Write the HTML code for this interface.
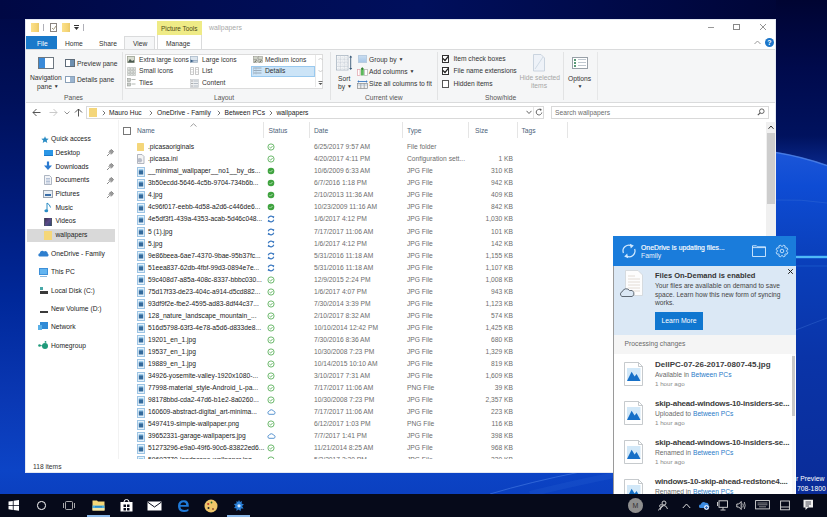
<!DOCTYPE html>
<html><head><meta charset="utf-8">
<style>
*{box-sizing:border-box;margin:0;padding:0}
html,body{width:827px;height:517px;overflow:hidden}
body{position:relative;font-family:"Liberation Sans",sans-serif;font-size:6.7px;color:#1e1e1e;background:#020a3a}
.a{position:absolute;white-space:nowrap}
.t{position:absolute;white-space:nowrap;line-height:10px;height:10px}
.ic{position:absolute}
</style></head><body>
<!-- desktop background -->
<div class="a" style="left:0;top:0;width:827px;height:517px;background:linear-gradient(180deg,#000844 0px,#00105a 100px,#001b7a 200px,#00289a 300px,#0a38b4 400px,#0c44c6 470px,#0b40c0 494px)"></div>
<div class="a" style="left:0;top:0;width:827px;height:19px;background:linear-gradient(90deg,#000844 0,#000c52 200px,#000f5c 420px,#000a4a 600px,#000432 827px)"></div>
<svg class="ic" style="left:776px;top:0" width="51" height="494">
<defs>
<linearGradient id="dk" x1="0" y1="0" x2="0" y2="1"><stop offset="0" stop-color="#000432"/><stop offset="0.4" stop-color="#000a4c"/><stop offset="0.8" stop-color="#00125e"/><stop offset="1" stop-color="#0a2a90"/></linearGradient>
<linearGradient id="bl" x1="0" y1="0" x2="0" y2="1"><stop offset="0" stop-color="#1c56d8"/><stop offset="0.1" stop-color="#0e4cd4"/><stop offset="0.3" stop-color="#0a40bc"/><stop offset="0.6" stop-color="#0a34a8"/><stop offset="1" stop-color="#0a2c98"/></linearGradient>
</defs>
<rect x="0" y="0" width="51" height="170" fill="url(#dk)"/>
<path d="M0 152 Q25 156 51 165 L51 494 L0 494 Z" fill="url(#bl)"/>
<path d="M0 152.5 Q25 156.5 51 165.5" stroke="#6a9af0" stroke-width="1.5" fill="none" opacity="0.55"/>
<path d="M0 200 Q25 199 51 203" stroke="#3a70d8" stroke-width="0.8" fill="none" opacity="0.5"/>
<path d="M20 257 L51 257" stroke="#30a0ff" stroke-width="3.5" opacity="0.35"/><path d="M20 257 L51 257" stroke="#60d0ff" stroke-width="1.6"/>
<path d="M20 330 Q35 324 51 318" stroke="#4a80e0" stroke-width="0.8" fill="none" opacity="0.4"/><path d="M20 266 L51 266" stroke="#3a90f0" stroke-width="0.8" opacity="0.35"/>
</svg>
<svg class="ic" style="left:380px;top:472px" width="240" height="22"><path d="M110 22 Q150 10 200 0" stroke="#5a90f0" stroke-width="1" fill="none" opacity="0.45"/><path d="M150 22 Q190 12 240 2" stroke="#4a80e8" stroke-width="6" fill="none" opacity="0.12"/></svg>
<div class="t" style="left:796px;top:474px;color:#fff;font-size:6.8px">r Preview</div>
<div class="t" style="left:797px;top:484px;color:#fff;font-size:6.8px">708-1800</div>
<!-- window -->
<div class="a" id="win" style="left:25px;top:19px;width:751px;height:454px;background:#fff;border:1px solid #e4e8f2"></div>

<!-- title bar -->
<div class="a" style="left:157px;top:20.5px;width:45px;height:14.5px;background:#efeb86"></div>
<div class="t" style="left:161px;top:23.5px;color:#4a4a18;font-size:6.4px">Picture Tools</div>
<div class="t" style="left:209px;top:23.3px;color:#a9a9a9;font-size:6.9px">wallpapers</div>

<!-- tabs -->
<div class="a" style="left:26px;top:36px;width:31px;height:13px;background:#1979ca"></div>
<div class="t" style="left:37px;top:38.8px;color:#fff;font-size:6.7px">File</div>
<div class="t" style="left:65px;top:38.8px;font-size:6.7px;color:#333">Home</div>
<div class="t" style="left:99px;top:38.8px;font-size:6.7px;color:#333">Share</div>
<div class="a" style="left:124px;top:36px;width:31px;height:14px;background:#f5f6f7;border:1px solid #dadbdc;border-bottom:none"></div>
<div class="t" style="left:133px;top:38.8px;font-size:6.7px;color:#333">View</div>
<div class="a" style="left:157px;top:35px;width:45px;height:15px;background:#fff;border:1px solid #dadbdc;border-bottom:none;border-top:none"></div>
<div class="t" style="left:166px;top:38.8px;font-size:6.7px;color:#333">Manage</div>

<!-- ribbon -->
<div class="a" style="left:26px;top:49px;width:749px;height:54px;background:#f5f6f7;border-top:1px solid #dadbdc;border-bottom:1px solid #dadbdc"></div>


<!-- quick access toolbar -->
<div class="a" style="left:31px;top:22.5px;width:8px;height:9px;background:linear-gradient(90deg,#fbe08a,#f4d374 70%,#e8c868)"></div>
<div class="a" style="left:43px;top:24px;width:1px;height:7px;background:#b0b0b8"></div>
<div class="a" style="left:50px;top:23px;width:7px;height:9px;border:1px solid #8a8480;background:#fff"></div>
<svg class="ic" style="left:51px;top:24px" width="6" height="7"><path d="M1 4 L2.5 5.5 L5 2" stroke="#9a9070" stroke-width="0.9" fill="none"/></svg>
<div class="a" style="left:62px;top:22.5px;width:8px;height:9px;background:linear-gradient(90deg,#fbe08a,#f4d374 70%,#e8c868)"></div>
<div class="a" style="left:74px;top:25px;width:5px;height:1px;background:#333"></div>
<svg class="ic" style="left:74px;top:27px" width="6" height="4"><path d="M0 0 L5 0 L2.5 3 Z" fill="#333"/></svg>
<div class="a" style="left:83px;top:24px;width:1px;height:7px;background:#b0b0b8"></div>

<!-- window controls -->
<div class="a" style="left:707.5px;top:27px;width:6.5px;height:1px;background:#999"></div>
<div class="a" style="left:733px;top:24px;width:6.5px;height:6px;border:1px solid #888"></div>
<svg class="ic" style="left:759px;top:23px" width="8" height="8"><path d="M1 1 L7 7 M7 1 L1 7" stroke="#888" stroke-width="0.9"/></svg>
<svg class="ic" style="left:754px;top:40px" width="7" height="5"><path d="M0.5 4 L3.5 1 L6.5 4" stroke="#999" stroke-width="1" fill="none"/></svg>
<div class="a" style="left:765px;top:38px;width:9px;height:9px;border-radius:50%;background:#1c75c9;color:#fff;font-size:7px;font-weight:bold;text-align:center;line-height:9px">?</div>

<!-- Panes group -->
<div class="a" style="left:38px;top:57px;width:16px;height:12px;border:1px solid #6d7780;background:#fff"></div>
<div class="a" style="left:39px;top:58px;width:6px;height:10px;background:#3a8ad8"></div>
<div class="t" style="left:30px;top:73px;color:#333">Navigation</div>
<div class="t" style="left:37px;top:80.5px;color:#333">pane <span style="font-size:5px;vertical-align:1px">&#9660;</span></div>
<div class="a" style="left:65px;top:59px;width:10px;height:8px;border:1px solid #5e6b78;background:#fff"></div>
<div class="a" style="left:70px;top:60px;width:4px;height:6px;background:#6d8fb0"></div>
<div class="t" style="left:77px;top:58.5px;color:#333">Preview pane</div>
<div class="a" style="left:65px;top:76px;width:10px;height:7px;border:1px solid #8aa0b8;background:#fff"></div>
<div class="a" style="left:70px;top:77px;width:4px;height:5px;background:#9bb5d0"></div>
<div class="t" style="left:77px;top:74.5px;color:#333">Details pane</div>
<div class="t" style="left:64px;top:92.6px;color:#555">Panes</div>
<div class="a" style="left:122px;top:52px;width:1px;height:48px;background:#e2e3e4"></div>

<!-- Layout group -->
<div class="a" style="left:125px;top:54px;width:198px;height:35px;border:1px solid #dcdcdc;background:#fff"></div>
<div class="a" style="left:251px;top:66px;width:64px;height:11px;background:#cce4f7;border:1px solid #99c9ef"></div>
<div class="a" style="left:315px;top:55px;width:1px;height:32px;background:#e8e8e8"></div>
<svg class="ic" style="left:318px;top:57px" width="5" height="30"><path d="M0.5 3 L2.5 1 L4.5 3" stroke="#c0c0c0" fill="none" stroke-width="0.8"/><path d="M0.5 13 L2.5 15 L4.5 13" stroke="#c0c0c0" fill="none" stroke-width="0.8"/><path d="M0.5 24.5 L4.5 24.5" stroke="#555" stroke-width="0.8"/><path d="M0.5 26 L4.5 26 L2.5 28 Z" fill="#555"/></svg>

<svg class="ic" style="left:127px;top:56px" width="8" height="7"><rect x="0.5" y="0.5" width="7" height="6" fill="#d8dcd0" stroke="#9aa090" stroke-width="0.8"/><path d="M1 6 L3 3 L5 5 L7 4 L7 6.5 L1 6.5 Z" fill="#4a5a50"/></svg>
<div class="t" style="left:139px;top:54.7px;color:#333">Extra large icons</div>
<svg class="ic" style="left:127px;top:67px" width="9" height="9"><path d="M0.5 0.5 h2.5 v2.5 h-2.5 Z M3.5 0.5 h2.5 v2.5 h-2.5 Z M6.5 0.5 h2 v2.5 h-2 Z M0.5 3.5 h2.5 v2.5 h-2.5 Z M3.5 3.5 h2.5 v2.5 h-2.5 Z M6.5 3.5 h2 v2.5 h-2 Z M0.5 6.5 h2.5 v2 h-2.5 Z M3.5 6.5 h2.5 v2 h-2.5 Z M6.5 6.5 h2 v2 h-2 Z" fill="#e0e4e0" stroke="#a8aca8" stroke-width="0.5"/></svg>
<div class="t" style="left:139px;top:66.3px;color:#333">Small icons</div>
<svg class="ic" style="left:127px;top:78px" width="9" height="9"><rect x="0.5" y="0.5" width="3" height="3" fill="#c8ccc8" stroke="#8a908a" stroke-width="0.5"/><rect x="0.5" y="5" width="3" height="3" fill="#c8ccc8" stroke="#8a908a" stroke-width="0.5"/><path d="M4.5 1.5 H8.5 M4.5 6 H8.5" stroke="#a0a4a0" stroke-width="0.8"/></svg>
<div class="t" style="left:139px;top:77.8px;color:#333">Tiles</div>

<svg class="ic" style="left:190px;top:56px" width="8" height="7"><rect x="0.5" y="0.5" width="7" height="6" fill="#dde6ee" stroke="#a8b8c8" stroke-width="0.8"/><path d="M0.5 3.5 L4 5 L0.5 6.5 Z" fill="#3a6088"/><path d="M2 4.8 H7.5" stroke="#6a88a8" stroke-width="0.8"/></svg>
<div class="t" style="left:202px;top:54.7px;color:#333">Large icons</div>
<svg class="ic" style="left:189.5px;top:67px" width="9" height="8"><path d="M0.5 0.5 h3 v7 h-3 Z M5.5 0.5 h3 v7 h-3 Z" fill="none" stroke="#b0b0b0" stroke-width="0.7"/><path d="M1 2.5 H3 M1 5 H3 M6 2.5 H8 M6 5 H8" stroke="#c0c0c0" stroke-width="0.6"/></svg>
<div class="t" style="left:202px;top:66.3px;color:#333">List</div>
<svg class="ic" style="left:189.5px;top:78.5px" width="9" height="9"><rect x="0.5" y="0.5" width="8" height="8" fill="#eef0f2" stroke="#c0c4c8" stroke-width="0.6"/><path d="M1.5 2 H2.5 M1.5 4.5 H2.5 M1.5 7 H2.5" stroke="#555" stroke-width="0.9"/><path d="M3.5 2 H8 M3.5 4.5 H8 M3.5 7 H8" stroke="#9aa4b0" stroke-width="0.7"/></svg>
<div class="t" style="left:202px;top:77.8px;color:#333">Content</div>

<svg class="ic" style="left:252.5px;top:56px" width="10" height="7"><rect x="0.5" y="0.5" width="4" height="2.7" fill="#d0d4c8" stroke="#8a8a80" stroke-width="0.5"/><rect x="5.5" y="0.5" width="4" height="2.7" fill="#d0d4c8" stroke="#8a8a80" stroke-width="0.5"/><rect x="0.5" y="3.8" width="4" height="2.7" fill="#d0d4c8" stroke="#8a8a80" stroke-width="0.5"/><rect x="5.5" y="3.8" width="4" height="2.7" fill="#d0d4c8" stroke="#8a8a80" stroke-width="0.5"/><path d="M1.5 6 L3.5 4.5 M6.5 6 L8.5 4.5" stroke="#3a3a30" stroke-width="0.8"/></svg>
<div class="t" style="left:265px;top:54.7px;color:#333">Medium icons</div>
<svg class="ic" style="left:252.5px;top:67px" width="9" height="8"><path d="M0.5 1 H8.5 M0.5 3.5 H8.5 M0.5 6 H8.5" stroke="#8a9aaa" stroke-width="0.8"/><path d="M0.5 0.5 V7.5 M3 0.5 V7.5" stroke="#a0b0c0" stroke-width="0.5"/></svg>
<div class="t" style="left:265px;top:66.3px;color:#333">Details</div>
<div class="t" style="left:214px;top:92.6px;color:#555">Layout</div>
<div class="a" style="left:330px;top:52px;width:1px;height:48px;background:#e2e3e4"></div>

<!-- Current view group -->
<svg class="ic" style="left:336px;top:55px" width="17" height="16"><rect x="0.5" y="0.5" width="11.5" height="14.5" fill="#fff" stroke="#a8b4c0" stroke-width="0.8"/><path d="M4.3 0.5 V15 M8.2 0.5 V15 M0.5 4.2 H12 M0.5 7.8 H12 M0.5 11.4 H12" stroke="#c4ccd4" stroke-width="0.7"/><path d="M1.5 1.5 h2 v2 h-2 Z M5.3 1.5 h2 v2 h-2 Z M9.1 1.5 h2 v2 h-2 Z M1.5 5.2 h2 v2 h-2 Z M5.3 5.2 h2 v2 h-2 Z M9.1 5.2 h2 v2 h-2 Z M1.5 8.8 h2 v2 h-2 Z M5.3 8.8 h2 v2 h-2 Z M9.1 8.8 h2 v2 h-2 Z M1.5 12.4 h2 v2 h-2 Z M5.3 12.4 h2 v2 h-2 Z M9.1 12.4 h2 v2 h-2 Z" fill="#e4e8ec"/><path d="M14.7 1.5 V14" stroke="#3a5a78" stroke-width="0.9"/><path d="M13.2 2.5 L14.7 0.5 L16.2 2.5 Z M13.2 13 L14.7 15 L16.2 13 Z" fill="#3a5a78"/></svg>
<div class="t" style="left:338px;top:73.7px;color:#333">Sort</div>
<div class="t" style="left:338px;top:80.5px;color:#333">by <span style="font-size:5px;vertical-align:1px">&#9660;</span></div>
<div class="a" style="left:358px;top:54.5px;width:8.5px;height:8px;background:linear-gradient(180deg,#c8dcf0,#a8c8e8);border:0.5px solid #b8cce0"></div>
<div class="t" style="left:369px;top:53.5px;color:#333">Group by <span style="font-size:5px;vertical-align:1px">&#9660;</span></div>
<svg class="ic" style="left:357px;top:66.5px" width="11" height="9"><rect x="0.5" y="2.5" width="2.5" height="6" fill="#fff" stroke="#e0a0a8" stroke-width="0.7"/><rect x="3.8" y="2" width="3" height="6.5" fill="#5cb85c"/><path d="M5.3 0.3 V3 M4 1.6 H6.6" stroke="#2a7a2a" stroke-width="0.9"/><rect x="7.6" y="2.5" width="2.8" height="6" fill="#fff" stroke="#b0b0b0" stroke-width="0.7"/></svg>
<div class="t" style="left:369px;top:66.3px;color:#333">Add columns <span style="font-size:5px;vertical-align:1px">&#9660;</span></div>
<svg class="ic" style="left:357px;top:79.5px" width="11" height="9"><path d="M1 1.5 H10" stroke="#3a78c0" stroke-width="0.9"/><path d="M0.3 1.5 L2 0.3 L2 2.7 Z M10.7 1.5 L9 0.3 L9 2.7 Z" fill="#3a78c0"/><rect x="0.5" y="3.5" width="10" height="5" fill="#f0f0f0" stroke="#8a8a8a" stroke-width="0.7"/><path d="M3.8 3.5 V8.5 M7.2 3.5 V8.5" stroke="#8a8a8a" stroke-width="0.7"/><path d="M0.5 5 H10.5" stroke="#a0b8d0" stroke-width="0.6"/></svg>
<div class="t" style="left:369px;top:79px;color:#333">Size all columns to fit</div>
<div class="t" style="left:365px;top:92.6px;color:#555">Current view</div>
<div class="a" style="left:437px;top:52px;width:1px;height:48px;background:#e2e3e4"></div>

<!-- Show/hide group -->
<div class="a" style="left:441.5px;top:55px;width:7.5px;height:7.5px;border:1px solid #333;background:#fff"></div>
<svg class="ic" style="left:442px;top:55px" width="7" height="7"><path d="M1 3.5 L3 5.5 L6.5 1.2" stroke="#222" stroke-width="1.2" fill="none"/></svg>
<div class="t" style="left:453.5px;top:53.9px;color:#333">Item check boxes</div>
<div class="a" style="left:441.5px;top:67px;width:7.5px;height:7.5px;border:1px solid #333;background:#fff"></div>
<svg class="ic" style="left:442px;top:67px" width="7" height="7"><path d="M1 3.5 L3 5.5 L6.5 1.2" stroke="#222" stroke-width="1.2" fill="none"/></svg>
<div class="t" style="left:453.5px;top:65.8px;color:#333">File name extensions</div>
<div class="a" style="left:441.5px;top:80px;width:7.5px;height:7.5px;border:1px solid #555;background:#fff"></div>
<div class="t" style="left:453.5px;top:78.7px;color:#333">Hidden items</div>
<svg class="ic" style="left:532px;top:54px" width="14" height="18"><path d="M1.5 0.5 L9 0.5 L12.5 4 L12.5 17 L1.5 17 Z" fill="#eef2f8" stroke="#c0ccd8" stroke-width="0.8"/><path d="M3 15 L11 3" stroke="#c8d4e0" stroke-width="0.8"/></svg>
<div class="t" style="left:519.5px;top:73.2px;color:#a6a6a6">Hide selected</div>
<div class="t" style="left:531px;top:80.7px;color:#a6a6a6">items</div>
<div class="t" style="left:485px;top:92.6px;color:#555">Show/hide</div>
<div class="a" style="left:563px;top:52px;width:1px;height:48px;background:#e2e3e4"></div>

<!-- Options -->
<div class="a" style="left:572px;top:57px;width:16px;height:12px;border:1px solid #98a0a8;background:#fff"></div>
<div class="a" style="left:574px;top:59px;width:2px;height:8px;background:repeating-linear-gradient(180deg,#5a9a78 0 1.5px,transparent 1.5px 3px)"></div>
<div class="a" style="left:578px;top:59px;width:8px;height:8px;background:repeating-linear-gradient(180deg,#c0c8d0 0 1px,transparent 1px 3px)"></div>
<div class="t" style="left:568px;top:74px;color:#333">Options</div>
<div class="t" style="left:577.5px;top:80.8px;color:#333"><span style="font-size:5px">&#9660;</span></div>
<div class="a" style="left:597px;top:52px;width:1px;height:48px;background:#e6e7e8"></div>

<!-- file area -->
<div class="a" style="left:118px;top:120px;width:1px;height:339px;background:#f2f2f2"></div>
<!-- address bar -->
<svg class="ic" style="left:32px;top:108px" width="9" height="9"><path d="M8.5 4.5 L1 4.5 M4.5 1 L1 4.5 L4.5 8" stroke="#444" stroke-width="0.9" fill="none"/></svg>
<svg class="ic" style="left:49px;top:108px" width="9" height="9"><path d="M0.5 4.5 L8 4.5 M4.5 1 L8 4.5 L4.5 8" stroke="#c4c4c4" stroke-width="0.9" fill="none"/></svg>
<svg class="ic" style="left:64px;top:111px" width="6" height="4"><path d="M0.5 0.5 L3 3 L5.5 0.5" stroke="#777" stroke-width="0.8" fill="none"/></svg>
<svg class="ic" style="left:74px;top:108px" width="9" height="9"><path d="M4.5 8.5 L4.5 1 M1 4.5 L4.5 1 L8 4.5" stroke="#444" stroke-width="0.9" fill="none"/></svg>
<div class="a" style="left:86px;top:106px;width:458px;height:13px;border:1px solid #d9d9d9;background:#fff"></div>
<div class="a" style="left:89px;top:108px;width:8px;height:9px;background:#f4d67a"></div>
<svg class="ic" style="left:101.5px;top:110px" width="4" height="6"><path d="M0.8 0.8 L3 3 L0.8 5.2" stroke="#666" stroke-width="0.9" fill="none"/></svg>
<div class="t" style="left:109px;top:107.5px;color:#222">Mauro Huc</div>
<svg class="ic" style="left:148.5px;top:110px" width="4" height="6"><path d="M0.8 0.8 L3 3 L0.8 5.2" stroke="#666" stroke-width="0.9" fill="none"/></svg>
<div class="t" style="left:157px;top:107.5px;color:#222">OneDrive - Family</div>
<svg class="ic" style="left:216.5px;top:110px" width="4" height="6"><path d="M0.8 0.8 L3 3 L0.8 5.2" stroke="#666" stroke-width="0.9" fill="none"/></svg>
<div class="t" style="left:224.5px;top:107.5px;color:#222">Between PCs</div>
<svg class="ic" style="left:268.5px;top:110px" width="4" height="6"><path d="M0.8 0.8 L3 3 L0.8 5.2" stroke="#666" stroke-width="0.9" fill="none"/></svg>
<div class="t" style="left:276.5px;top:107.5px;color:#222">wallpapers</div>
<svg class="ic" style="left:526px;top:110px" width="6" height="5"><path d="M0.5 0.8 L3 3.5 L5.5 0.8" stroke="#555" stroke-width="0.9" fill="none"/></svg>
<div class="a" style="left:533px;top:107px;width:1px;height:11px;background:#e4e4e4"></div>
<svg class="ic" style="left:535px;top:108px" width="8" height="8"><path d="M5.8 2 A2.8 2.8 0 1 0 6.8 4.5" stroke="#555" stroke-width="0.9" fill="none"/><path d="M4.4 0.6 L6.6 1 L6 3.2 Z" fill="#555"/></svg>
<div class="a" style="left:551px;top:106px;width:218px;height:13px;border:1px solid #d9d9d9;background:#fff"></div>
<div class="t" style="left:555px;top:107.5px;color:#6d6d6d">Search wallpapers</div>
<svg class="ic" style="left:757px;top:108px" width="8" height="8"><circle cx="4.8" cy="3.2" r="2.3" stroke="#555" stroke-width="0.9" fill="none"/><path d="M3.2 4.8 L0.8 7.2" stroke="#555" stroke-width="1.1"/></svg>

<!-- column headers -->
<div class="a" style="left:123px;top:126.5px;width:8px;height:8px;border:1px solid #777;background:#fff"></div>
<div class="t" style="left:137px;top:125.5px;color:#4c5f7a">Name</div>
<svg class="ic" style="left:190px;top:123px" width="7" height="4"><path d="M0.5 3.5 L3.5 0.8 L6.5 3.5" stroke="#888" stroke-width="0.8" fill="none"/></svg>
<div class="a" style="left:263px;top:122px;width:1px;height:16px;background:#e5e5e5"></div>
<div class="t" style="left:268.5px;top:125.5px;color:#4c5f7a">Status</div>
<div class="a" style="left:309px;top:122px;width:1px;height:16px;background:#e5e5e5"></div>
<div class="t" style="left:314px;top:125.5px;color:#4c5f7a">Date</div>
<div class="a" style="left:402px;top:122px;width:1px;height:16px;background:#e5e5e5"></div>
<div class="t" style="left:407px;top:125.5px;color:#4c5f7a">Type</div>
<div class="a" style="left:468px;top:122px;width:1px;height:16px;background:#e5e5e5"></div>
<div class="t" style="left:475px;top:125.5px;color:#4c5f7a">Size</div>
<div class="a" style="left:517px;top:122px;width:1px;height:16px;background:#e5e5e5"></div>
<div class="t" style="left:521.5px;top:125.5px;color:#4c5f7a">Tags</div>
<div class="a" style="left:567px;top:122px;width:1px;height:16px;background:#e5e5e5"></div>

<!-- scrollbar -->
<div class="a" style="left:766px;top:122px;width:10px;height:338px;background:#f0f0f0"></div>
<svg class="ic" style="left:768px;top:125px" width="6" height="5"><path d="M0.5 3.8 L3 1 L5.5 3.8" stroke="#333" stroke-width="1" fill="none"/></svg>
<div class="a" style="left:767px;top:133px;width:8px;height:71px;background:#cdcdcd"></div>

<!-- status bar -->
<div class="t" style="left:33px;top:461.5px;color:#333">118 items</div>

<!-- nav pane -->
<svg class="ic" style="left:40.5px;top:135.5px" width="8" height="7"><path d="M4 0.2 L5 2.6 L7.7 2.8 L5.7 4.5 L6.3 7 L4 5.6 L1.7 7 L2.3 4.5 L0.3 2.8 L3 2.6 Z" fill="#2a8cc4"/></svg>
<div class="t" style="left:51px;top:134px;color:#222">Quick access</div>
<div class="a" style="left:43.5px;top:149.5px;width:9.5px;height:6.5px;background:#2a96e6;border-bottom:1px solid #1a78c8"></div>
<div class="t" style="left:55.5px;top:148px;color:#222">Desktop</div>
<svg class="ic" style="left:43px;top:161px" width="10" height="10"><path d="M5 0.5 L5 7" stroke="#2b7ad0" stroke-width="2.2"/><path d="M1 4.5 L5 9 L9 4.5 Z" fill="#2b7ad0"/></svg>
<div class="t" style="left:55.5px;top:161.5px;color:#222">Downloads</div>
<svg class="ic" style="left:44px;top:175px" width="8" height="10"><path d="M0.5 0.5 L5.5 0.5 L7.5 2.5 L7.5 9.5 L0.5 9.5 Z" fill="#f2f4f8" stroke="#9aa4b4" stroke-width="0.8"/><path d="M2 3.5 H6 M2 5 H6 M2 6.5 H6 M2 8 H6" stroke="#8aa0c0" stroke-width="0.6"/></svg>
<div class="t" style="left:55.5px;top:175px;color:#222">Documents</div>
<div class="a" style="left:43px;top:190px;width:10px;height:8px;background:#e8eef4;border:1px solid #9aa4b0"></div>
<div class="a" style="left:45px;top:194px;width:6px;height:2px;background:#3a6ea8"></div>
<div class="t" style="left:55.5px;top:189px;color:#222">Pictures</div>
<svg class="ic" style="left:44px;top:202px" width="8" height="11"><path d="M3 1 L3 8.5" stroke="#2a8cc4" stroke-width="1"/><ellipse cx="2.3" cy="8.8" rx="1.9" ry="1.5" fill="#2a8cc4"/><path d="M3 1 Q6 2.5 6.5 5.5" stroke="#2a8cc4" stroke-width="1" fill="none"/></svg>
<div class="t" style="left:55.5px;top:203px;color:#222">Music</div>
<div class="a" style="left:44px;top:217.5px;width:8px;height:8.5px;background:linear-gradient(135deg,#3a3050,#5a4a88 50%,#2a4a6a);border-left:1.5px solid #4a5464;border-right:1.5px solid #4a5464"></div>
<div class="t" style="left:55.5px;top:216px;color:#222">Videos</div>
<div class="a" style="left:27px;top:229px;width:88px;height:13px;background:#d9d9d9"></div>
<div class="a" style="left:44px;top:231px;width:8px;height:9px;background:#f5d77a"></div>
<div class="t" style="left:55.5px;top:230px;color:#222">wallpapers</div>
<svg class="ic" style="left:106px;top:149px" width="8" height="8"><path d="M1 7 L3.5 4.5 M2.5 3 L5 5.5 M3 2.5 L5.5 0.5 L7.5 2.5 L5.5 5" stroke="#8a8a8a" stroke-width="1" fill="#9a9a9a"/></svg>
<svg class="ic" style="left:106px;top:163px" width="8" height="8"><path d="M1 7 L3.5 4.5 M2.5 3 L5 5.5 M3 2.5 L5.5 0.5 L7.5 2.5 L5.5 5" stroke="#8a8a8a" stroke-width="1" fill="#9a9a9a"/></svg>
<svg class="ic" style="left:106px;top:177px" width="8" height="8"><path d="M1 7 L3.5 4.5 M2.5 3 L5 5.5 M3 2.5 L5.5 0.5 L7.5 2.5 L5.5 5" stroke="#8a8a8a" stroke-width="1" fill="#9a9a9a"/></svg>
<svg class="ic" style="left:106px;top:191px" width="8" height="8"><path d="M1 7 L3.5 4.5 M2.5 3 L5 5.5 M3 2.5 L5.5 0.5 L7.5 2.5 L5.5 5" stroke="#8a8a8a" stroke-width="1" fill="#9a9a9a"/></svg>

<svg class="ic" style="left:38px;top:249px" width="11" height="8"><path d="M1.5 7.5 A1.7 1.7 0 0 1 1.8 4.2 A2.6 2.6 0 0 1 6 2.4 A2.6 2.6 0 0 1 9.8 4.8 A1.5 1.5 0 0 1 9.6 7.5 Z" fill="#2f7fce"/></svg>
<div class="t" style="left:51px;top:248.8px;color:#222">OneDrive - Family</div>
<div class="a" style="left:39px;top:268px;width:9px;height:7px;background:#62b4f0;border:1px solid #3d8fd8"></div>
<div class="a" style="left:40px;top:276px;width:7px;height:1px;background:#8ab8e0"></div>
<div class="t" style="left:51px;top:267.2px;color:#222">This PC</div>
<div class="a" style="left:39.5px;top:287px;width:3.5px;height:3px;background:#48a8a8"></div>
<div class="a" style="left:40px;top:291px;width:7.5px;height:2.5px;background:#3a3a3a"></div>
<div class="t" style="left:51px;top:285.7px;color:#222">Local Disk (C:)</div>
<div class="a" style="left:40px;top:310.5px;width:7.5px;height:2.3px;background:#3a3a3a"></div>
<div class="t" style="left:51px;top:303.9px;color:#222">New Volume (D:)</div>
<div class="a" style="left:40px;top:322px;width:8px;height:7px;background:#2f8ad6"></div>
<div class="a" style="left:38px;top:325px;width:4px;height:5px;background:#5ab0e8"></div>
<div class="t" style="left:51px;top:322.1px;color:#222">Network</div>
<svg class="ic" style="left:37px;top:341px" width="12" height="10"><circle cx="8" cy="5" r="3" fill="#1e9a7a"/><circle cx="2.5" cy="4.5" r="1.3" fill="#1e9a7a"/><circle cx="8.5" cy="0.9" r="0.9" fill="#1e9a7a"/><path d="M2.5 4.5 L8 5" stroke="#1e9a7a" stroke-width="0.8"/></svg>
<div class="t" style="left:51px;top:340.6px;color:#222">Homegroup</div>

<div class="a" style="left:0;top:0;width:827px;height:459px;overflow:hidden">
<div class="a" style="left:137px;top:143.2px;width:7px;height:8px;background:#f4d67a;border-radius:0.5px"></div>
<div class="t" style="left:148px;top:142.2px;color:#222">.picasaoriginals</div>
<svg class="ic" style="left:267px;top:143.2px" width="8" height="8"><circle cx="4" cy="4" r="3.1" fill="none" stroke="#4aa84a" stroke-width="0.8"/><path d="M2.5 4.1 L3.6 5.1 L5.6 3" stroke="#4aa84a" stroke-width="0.8" fill="none"/></svg>
<div class="t" style="left:314px;top:142.2px;color:#6d6d6d">6/25/2017 9:57 AM</div>
<div class="t" style="left:407px;top:142.2px;color:#6d6d6d">File folder</div>
<svg class="ic" style="left:136px;top:154.2px" width="9" height="10"><path d="M1.5 0.5 L6 0.5 L8 2.5 L8 9.5 L1.5 9.5 Z" fill="#f4f4f4" stroke="#a0a4b0" stroke-width="0.8"/><circle cx="3.8" cy="6.2" r="2.3" fill="#b8bcc8"/></svg>
<div class="t" style="left:148px;top:154.2px;color:#222">.picasa.ini</div>
<svg class="ic" style="left:267px;top:155.2px" width="8" height="8"><circle cx="4" cy="4" r="3.1" fill="none" stroke="#4aa84a" stroke-width="0.8"/><path d="M2.5 4.1 L3.6 5.1 L5.6 3" stroke="#4aa84a" stroke-width="0.8" fill="none"/></svg>
<div class="t" style="left:314px;top:154.2px;color:#6d6d6d">4/20/2017 4:11 PM</div>
<div class="t" style="left:407px;top:154.2px;color:#6d6d6d">Configuration sett...</div>
<div class="t" style="right:314px;top:154.2px;color:#6d6d6d">1 KB</div>
<svg class="ic" style="left:136.5px;top:166.8px" width="8" height="10"><rect x="0.5" y="0.5" width="7" height="9" fill="#e6f2fb" stroke="#9cc4e4" stroke-width="1"/><rect x="1.8" y="3.2" width="4.4" height="4.3" fill="#336a9c"/><rect x="1.8" y="2.2" width="4.4" height="1" fill="#8ac4e8"/></svg>
<div class="t" style="left:148px;top:166.3px;color:#222">__minimal_wallpaper__no1__by_ds...</div>
<svg class="ic" style="left:267px;top:167.3px" width="8" height="8"><circle cx="4" cy="4" r="3.3" fill="#3fa33f"/><path d="M2.5 4.1 L3.5 5.1 L5.5 3" stroke="#b8e0b8" stroke-width="0.9" fill="none"/></svg>
<div class="t" style="left:314px;top:166.3px;color:#6d6d6d">10/6/2009 6:33 AM</div>
<div class="t" style="left:407px;top:166.3px;color:#6d6d6d">JPG File</div>
<div class="t" style="right:314px;top:166.3px;color:#6d6d6d">310 KB</div>
<svg class="ic" style="left:136.5px;top:178.8px" width="8" height="10"><rect x="0.5" y="0.5" width="7" height="9" fill="#e6f2fb" stroke="#9cc4e4" stroke-width="1"/><rect x="1.8" y="3.2" width="4.4" height="4.3" fill="#336a9c"/><rect x="1.8" y="2.2" width="4.4" height="1" fill="#8ac4e8"/></svg>
<div class="t" style="left:148px;top:178.3px;color:#222">3b50ecdd-5646-4c5b-9704-734b6b...</div>
<svg class="ic" style="left:267px;top:179.3px" width="8" height="8"><circle cx="4" cy="4" r="3.3" fill="#3fa33f"/><path d="M2.5 4.1 L3.5 5.1 L5.5 3" stroke="#b8e0b8" stroke-width="0.9" fill="none"/></svg>
<div class="t" style="left:314px;top:178.3px;color:#6d6d6d">6/7/2016 1:18 PM</div>
<div class="t" style="left:407px;top:178.3px;color:#6d6d6d">JPG File</div>
<div class="t" style="right:314px;top:178.3px;color:#6d6d6d">942 KB</div>
<svg class="ic" style="left:136.5px;top:190.9px" width="8" height="10"><rect x="0.5" y="0.5" width="7" height="9" fill="#e6f2fb" stroke="#9cc4e4" stroke-width="1"/><rect x="1.8" y="3.2" width="4.4" height="4.3" fill="#336a9c"/><rect x="1.8" y="2.2" width="4.4" height="1" fill="#8ac4e8"/></svg>
<div class="t" style="left:148px;top:190.4px;color:#222">4.jpg</div>
<svg class="ic" style="left:267px;top:191.4px" width="8" height="8"><circle cx="4" cy="4" r="3.3" fill="#3fa33f"/><path d="M2.5 4.1 L3.5 5.1 L5.5 3" stroke="#b8e0b8" stroke-width="0.9" fill="none"/></svg>
<div class="t" style="left:314px;top:190.4px;color:#6d6d6d">2/10/2013 11:36 AM</div>
<div class="t" style="left:407px;top:190.4px;color:#6d6d6d">JPG File</div>
<div class="t" style="right:314px;top:190.4px;color:#6d6d6d">409 KB</div>
<svg class="ic" style="left:136.5px;top:202.9px" width="8" height="10"><rect x="0.5" y="0.5" width="7" height="9" fill="#e6f2fb" stroke="#9cc4e4" stroke-width="1"/><rect x="1.8" y="3.2" width="4.4" height="4.3" fill="#336a9c"/><rect x="1.8" y="2.2" width="4.4" height="1" fill="#8ac4e8"/></svg>
<div class="t" style="left:148px;top:202.4px;color:#222">4c96f017-eebb-4d58-a2d6-c446de6...</div>
<svg class="ic" style="left:267px;top:203.4px" width="8" height="8"><circle cx="4" cy="4" r="3.3" fill="#3fa33f"/><path d="M2.5 4.1 L3.5 5.1 L5.5 3" stroke="#b8e0b8" stroke-width="0.9" fill="none"/></svg>
<div class="t" style="left:314px;top:202.4px;color:#6d6d6d">10/23/2009 11:16 AM</div>
<div class="t" style="left:407px;top:202.4px;color:#6d6d6d">JPG File</div>
<div class="t" style="right:314px;top:202.4px;color:#6d6d6d">842 KB</div>
<svg class="ic" style="left:136.5px;top:214.9px" width="8" height="10"><rect x="0.5" y="0.5" width="7" height="9" fill="#e6f2fb" stroke="#9cc4e4" stroke-width="1"/><rect x="1.8" y="3.2" width="4.4" height="4.3" fill="#336a9c"/><rect x="1.8" y="2.2" width="4.4" height="1" fill="#8ac4e8"/></svg>
<div class="t" style="left:148px;top:214.4px;color:#222">4e5df3f1-439a-4353-acab-5d46c048...</div>
<svg class="ic" style="left:267px;top:215.4px" width="8" height="8"><path d="M1.2 3.2 A3 3 0 0 1 6.6 2.6 M6.8 4.8 A3 3 0 0 1 1.4 5.4" stroke="#3a78c0" stroke-width="1.15" fill="none"/><path d="M5.2 1.2 L7.3 1.3 L6.8 3.4 Z M2.8 6.8 L0.7 6.7 L1.2 4.6 Z" fill="#3a78c0"/></svg>
<div class="t" style="left:314px;top:214.4px;color:#6d6d6d">1/6/2017 4:12 PM</div>
<div class="t" style="left:407px;top:214.4px;color:#6d6d6d">JPG File</div>
<div class="t" style="right:314px;top:214.4px;color:#6d6d6d">1,030 KB</div>
<svg class="ic" style="left:136.5px;top:227.0px" width="8" height="10"><rect x="0.5" y="0.5" width="7" height="9" fill="#e6f2fb" stroke="#9cc4e4" stroke-width="1"/><rect x="1.8" y="3.2" width="4.4" height="4.3" fill="#336a9c"/><rect x="1.8" y="2.2" width="4.4" height="1" fill="#8ac4e8"/></svg>
<div class="t" style="left:148px;top:226.5px;color:#222">5 (1).jpg</div>
<svg class="ic" style="left:267px;top:227.5px" width="8" height="8"><path d="M1.2 3.2 A3 3 0 0 1 6.6 2.6 M6.8 4.8 A3 3 0 0 1 1.4 5.4" stroke="#3a78c0" stroke-width="1.15" fill="none"/><path d="M5.2 1.2 L7.3 1.3 L6.8 3.4 Z M2.8 6.8 L0.7 6.7 L1.2 4.6 Z" fill="#3a78c0"/></svg>
<div class="t" style="left:314px;top:226.5px;color:#6d6d6d">7/17/2017 11:06 AM</div>
<div class="t" style="left:407px;top:226.5px;color:#6d6d6d">JPG File</div>
<div class="t" style="right:314px;top:226.5px;color:#6d6d6d">101 KB</div>
<svg class="ic" style="left:136.5px;top:239.0px" width="8" height="10"><rect x="0.5" y="0.5" width="7" height="9" fill="#e6f2fb" stroke="#9cc4e4" stroke-width="1"/><rect x="1.8" y="3.2" width="4.4" height="4.3" fill="#336a9c"/><rect x="1.8" y="2.2" width="4.4" height="1" fill="#8ac4e8"/></svg>
<div class="t" style="left:148px;top:238.5px;color:#222">5.jpg</div>
<svg class="ic" style="left:267px;top:239.5px" width="8" height="8"><path d="M1.2 3.2 A3 3 0 0 1 6.6 2.6 M6.8 4.8 A3 3 0 0 1 1.4 5.4" stroke="#3a78c0" stroke-width="1.15" fill="none"/><path d="M5.2 1.2 L7.3 1.3 L6.8 3.4 Z M2.8 6.8 L0.7 6.7 L1.2 4.6 Z" fill="#3a78c0"/></svg>
<div class="t" style="left:314px;top:238.5px;color:#6d6d6d">1/6/2017 4:12 PM</div>
<div class="t" style="left:407px;top:238.5px;color:#6d6d6d">JPG File</div>
<div class="t" style="right:314px;top:238.5px;color:#6d6d6d">142 KB</div>
<svg class="ic" style="left:136.5px;top:251.1px" width="8" height="10"><rect x="0.5" y="0.5" width="7" height="9" fill="#e6f2fb" stroke="#9cc4e4" stroke-width="1"/><rect x="1.8" y="3.2" width="4.4" height="4.3" fill="#336a9c"/><rect x="1.8" y="2.2" width="4.4" height="1" fill="#8ac4e8"/></svg>
<div class="t" style="left:148px;top:250.6px;color:#222">9e86beea-6ae7-4370-9bae-95b37fc...</div>
<svg class="ic" style="left:267px;top:251.6px" width="8" height="8"><path d="M1.2 3.2 A3 3 0 0 1 6.6 2.6 M6.8 4.8 A3 3 0 0 1 1.4 5.4" stroke="#3a78c0" stroke-width="1.15" fill="none"/><path d="M5.2 1.2 L7.3 1.3 L6.8 3.4 Z M2.8 6.8 L0.7 6.7 L1.2 4.6 Z" fill="#3a78c0"/></svg>
<div class="t" style="left:314px;top:250.6px;color:#6d6d6d">5/31/2016 11:18 AM</div>
<div class="t" style="left:407px;top:250.6px;color:#6d6d6d">JPG File</div>
<div class="t" style="right:314px;top:250.6px;color:#6d6d6d">1,155 KB</div>
<svg class="ic" style="left:136.5px;top:263.1px" width="8" height="10"><rect x="0.5" y="0.5" width="7" height="9" fill="#e6f2fb" stroke="#9cc4e4" stroke-width="1"/><rect x="1.8" y="3.2" width="4.4" height="4.3" fill="#336a9c"/><rect x="1.8" y="2.2" width="4.4" height="1" fill="#8ac4e8"/></svg>
<div class="t" style="left:148px;top:262.6px;color:#222">51eea837-62db-4fbf-99d3-0894e7e...</div>
<svg class="ic" style="left:267px;top:263.6px" width="8" height="8"><path d="M1.2 3.2 A3 3 0 0 1 6.6 2.6 M6.8 4.8 A3 3 0 0 1 1.4 5.4" stroke="#3a78c0" stroke-width="1.15" fill="none"/><path d="M5.2 1.2 L7.3 1.3 L6.8 3.4 Z M2.8 6.8 L0.7 6.7 L1.2 4.6 Z" fill="#3a78c0"/></svg>
<div class="t" style="left:314px;top:262.6px;color:#6d6d6d">5/31/2016 11:18 AM</div>
<div class="t" style="left:407px;top:262.6px;color:#6d6d6d">JPG File</div>
<div class="t" style="right:314px;top:262.6px;color:#6d6d6d">1,107 KB</div>
<svg class="ic" style="left:136.5px;top:275.1px" width="8" height="10"><rect x="0.5" y="0.5" width="7" height="9" fill="#e6f2fb" stroke="#9cc4e4" stroke-width="1"/><rect x="1.8" y="3.2" width="4.4" height="4.3" fill="#336a9c"/><rect x="1.8" y="2.2" width="4.4" height="1" fill="#8ac4e8"/></svg>
<div class="t" style="left:148px;top:274.6px;color:#222">59c408d7-a85a-408c-8337-bbbc030...</div>
<svg class="ic" style="left:267px;top:275.6px" width="8" height="8"><circle cx="4" cy="4" r="3.1" fill="none" stroke="#4aa84a" stroke-width="0.8"/><path d="M2.5 4.1 L3.6 5.1 L5.6 3" stroke="#4aa84a" stroke-width="0.8" fill="none"/></svg>
<div class="t" style="left:314px;top:274.6px;color:#6d6d6d">12/9/2015 2:24 PM</div>
<div class="t" style="left:407px;top:274.6px;color:#6d6d6d">JPG File</div>
<div class="t" style="right:314px;top:274.6px;color:#6d6d6d">1,008 KB</div>
<svg class="ic" style="left:136.5px;top:287.2px" width="8" height="10"><rect x="0.5" y="0.5" width="7" height="9" fill="#e6f2fb" stroke="#9cc4e4" stroke-width="1"/><rect x="1.8" y="3.2" width="4.4" height="4.3" fill="#336a9c"/><rect x="1.8" y="2.2" width="4.4" height="1" fill="#8ac4e8"/></svg>
<div class="t" style="left:148px;top:286.7px;color:#222">75d17f33-de23-404c-a914-d5cd882...</div>
<svg class="ic" style="left:267px;top:287.7px" width="8" height="8"><circle cx="4" cy="4" r="3.1" fill="none" stroke="#4aa84a" stroke-width="0.8"/><path d="M2.5 4.1 L3.6 5.1 L5.6 3" stroke="#4aa84a" stroke-width="0.8" fill="none"/></svg>
<div class="t" style="left:314px;top:286.7px;color:#6d6d6d">1/6/2017 4:07 PM</div>
<div class="t" style="left:407px;top:286.7px;color:#6d6d6d">JPG File</div>
<div class="t" style="right:314px;top:286.7px;color:#6d6d6d">943 KB</div>
<svg class="ic" style="left:136.5px;top:299.2px" width="8" height="10"><rect x="0.5" y="0.5" width="7" height="9" fill="#e6f2fb" stroke="#9cc4e4" stroke-width="1"/><rect x="1.8" y="3.2" width="4.4" height="4.3" fill="#336a9c"/><rect x="1.8" y="2.2" width="4.4" height="1" fill="#8ac4e8"/></svg>
<div class="t" style="left:148px;top:298.7px;color:#222">93df9f2e-fbe2-4595-ad83-8df44c37...</div>
<svg class="ic" style="left:267px;top:299.7px" width="8" height="8"><circle cx="4" cy="4" r="3.1" fill="none" stroke="#4aa84a" stroke-width="0.8"/><path d="M2.5 4.1 L3.6 5.1 L5.6 3" stroke="#4aa84a" stroke-width="0.8" fill="none"/></svg>
<div class="t" style="left:314px;top:298.7px;color:#6d6d6d">7/30/2014 3:39 PM</div>
<div class="t" style="left:407px;top:298.7px;color:#6d6d6d">JPG File</div>
<div class="t" style="right:314px;top:298.7px;color:#6d6d6d">1,123 KB</div>
<svg class="ic" style="left:136.5px;top:311.3px" width="8" height="10"><rect x="0.5" y="0.5" width="7" height="9" fill="#e6f2fb" stroke="#9cc4e4" stroke-width="1"/><rect x="1.8" y="3.2" width="4.4" height="4.3" fill="#336a9c"/><rect x="1.8" y="2.2" width="4.4" height="1" fill="#8ac4e8"/></svg>
<div class="t" style="left:148px;top:310.8px;color:#222">128_nature_landscape_mountain_...</div>
<svg class="ic" style="left:267px;top:311.8px" width="8" height="8"><circle cx="4" cy="4" r="3.1" fill="none" stroke="#4aa84a" stroke-width="0.8"/><path d="M2.5 4.1 L3.6 5.1 L5.6 3" stroke="#4aa84a" stroke-width="0.8" fill="none"/></svg>
<div class="t" style="left:314px;top:310.8px;color:#6d6d6d">2/10/2017 8:32 AM</div>
<div class="t" style="left:407px;top:310.8px;color:#6d6d6d">JPG File</div>
<div class="t" style="right:314px;top:310.8px;color:#6d6d6d">574 KB</div>
<svg class="ic" style="left:136.5px;top:323.3px" width="8" height="10"><rect x="0.5" y="0.5" width="7" height="9" fill="#e6f2fb" stroke="#9cc4e4" stroke-width="1"/><rect x="1.8" y="3.2" width="4.4" height="4.3" fill="#336a9c"/><rect x="1.8" y="2.2" width="4.4" height="1" fill="#8ac4e8"/></svg>
<div class="t" style="left:148px;top:322.8px;color:#222">516d5798-63f3-4e78-a5d6-d833de8...</div>
<svg class="ic" style="left:267px;top:323.8px" width="8" height="8"><circle cx="4" cy="4" r="3.1" fill="none" stroke="#4aa84a" stroke-width="0.8"/><path d="M2.5 4.1 L3.6 5.1 L5.6 3" stroke="#4aa84a" stroke-width="0.8" fill="none"/></svg>
<div class="t" style="left:314px;top:322.8px;color:#6d6d6d">10/10/2014 12:42 PM</div>
<div class="t" style="left:407px;top:322.8px;color:#6d6d6d">JPG File</div>
<div class="t" style="right:314px;top:322.8px;color:#6d6d6d">1,425 KB</div>
<svg class="ic" style="left:136.5px;top:335.3px" width="8" height="10"><rect x="0.5" y="0.5" width="7" height="9" fill="#e6f2fb" stroke="#9cc4e4" stroke-width="1"/><rect x="1.8" y="3.2" width="4.4" height="4.3" fill="#336a9c"/><rect x="1.8" y="2.2" width="4.4" height="1" fill="#8ac4e8"/></svg>
<div class="t" style="left:148px;top:334.8px;color:#222">19201_en_1.jpg</div>
<svg class="ic" style="left:267px;top:335.8px" width="8" height="8"><circle cx="4" cy="4" r="3.1" fill="none" stroke="#4aa84a" stroke-width="0.8"/><path d="M2.5 4.1 L3.6 5.1 L5.6 3" stroke="#4aa84a" stroke-width="0.8" fill="none"/></svg>
<div class="t" style="left:314px;top:334.8px;color:#6d6d6d">7/30/2016 8:36 AM</div>
<div class="t" style="left:407px;top:334.8px;color:#6d6d6d">JPG File</div>
<div class="t" style="right:314px;top:334.8px;color:#6d6d6d">680 KB</div>
<svg class="ic" style="left:136.5px;top:347.4px" width="8" height="10"><rect x="0.5" y="0.5" width="7" height="9" fill="#e6f2fb" stroke="#9cc4e4" stroke-width="1"/><rect x="1.8" y="3.2" width="4.4" height="4.3" fill="#336a9c"/><rect x="1.8" y="2.2" width="4.4" height="1" fill="#8ac4e8"/></svg>
<div class="t" style="left:148px;top:346.9px;color:#222">19537_en_1.jpg</div>
<svg class="ic" style="left:267px;top:347.9px" width="8" height="8"><circle cx="4" cy="4" r="3.1" fill="none" stroke="#4aa84a" stroke-width="0.8"/><path d="M2.5 4.1 L3.6 5.1 L5.6 3" stroke="#4aa84a" stroke-width="0.8" fill="none"/></svg>
<div class="t" style="left:314px;top:346.9px;color:#6d6d6d">10/30/2008 7:23 PM</div>
<div class="t" style="left:407px;top:346.9px;color:#6d6d6d">JPG File</div>
<div class="t" style="right:314px;top:346.9px;color:#6d6d6d">1,329 KB</div>
<svg class="ic" style="left:136.5px;top:359.4px" width="8" height="10"><rect x="0.5" y="0.5" width="7" height="9" fill="#e6f2fb" stroke="#9cc4e4" stroke-width="1"/><rect x="1.8" y="3.2" width="4.4" height="4.3" fill="#336a9c"/><rect x="1.8" y="2.2" width="4.4" height="1" fill="#8ac4e8"/></svg>
<div class="t" style="left:148px;top:358.9px;color:#222">19889_en_1.jpg</div>
<svg class="ic" style="left:267px;top:359.9px" width="8" height="8"><circle cx="4" cy="4" r="3.1" fill="none" stroke="#4aa84a" stroke-width="0.8"/><path d="M2.5 4.1 L3.6 5.1 L5.6 3" stroke="#4aa84a" stroke-width="0.8" fill="none"/></svg>
<div class="t" style="left:314px;top:358.9px;color:#6d6d6d">10/14/2015 10:10 AM</div>
<div class="t" style="left:407px;top:358.9px;color:#6d6d6d">JPG File</div>
<div class="t" style="right:314px;top:358.9px;color:#6d6d6d">819 KB</div>
<svg class="ic" style="left:136.5px;top:371.5px" width="8" height="10"><rect x="0.5" y="0.5" width="7" height="9" fill="#e6f2fb" stroke="#9cc4e4" stroke-width="1"/><rect x="1.8" y="3.2" width="4.4" height="4.3" fill="#336a9c"/><rect x="1.8" y="2.2" width="4.4" height="1" fill="#8ac4e8"/></svg>
<div class="t" style="left:148px;top:371.0px;color:#222">34926-yosemite-valley-1920x1080-...</div>
<svg class="ic" style="left:267px;top:372.0px" width="8" height="8"><circle cx="4" cy="4" r="3.1" fill="none" stroke="#4aa84a" stroke-width="0.8"/><path d="M2.5 4.1 L3.6 5.1 L5.6 3" stroke="#4aa84a" stroke-width="0.8" fill="none"/></svg>
<div class="t" style="left:314px;top:371.0px;color:#6d6d6d">3/10/2017 7:31 AM</div>
<div class="t" style="left:407px;top:371.0px;color:#6d6d6d">JPG File</div>
<div class="t" style="right:314px;top:371.0px;color:#6d6d6d">1,609 KB</div>
<svg class="ic" style="left:136.5px;top:383.5px" width="8" height="10"><rect x="0.5" y="0.5" width="7" height="9" fill="#e6f2fb" stroke="#9cc4e4" stroke-width="1"/><rect x="1.8" y="3.2" width="4.4" height="4.3" fill="#336a9c"/><rect x="1.8" y="2.2" width="4.4" height="1" fill="#8ac4e8"/></svg>
<div class="t" style="left:148px;top:383.0px;color:#222">77998-material_style-Android_L-pa...</div>
<svg class="ic" style="left:267px;top:384.0px" width="8" height="8"><circle cx="4" cy="4" r="3.1" fill="none" stroke="#4aa84a" stroke-width="0.8"/><path d="M2.5 4.1 L3.6 5.1 L5.6 3" stroke="#4aa84a" stroke-width="0.8" fill="none"/></svg>
<div class="t" style="left:314px;top:383.0px;color:#6d6d6d">7/17/2017 11:06 AM</div>
<div class="t" style="left:407px;top:383.0px;color:#6d6d6d">PNG File</div>
<div class="t" style="right:314px;top:383.0px;color:#6d6d6d">39 KB</div>
<svg class="ic" style="left:136.5px;top:395.5px" width="8" height="10"><rect x="0.5" y="0.5" width="7" height="9" fill="#e6f2fb" stroke="#9cc4e4" stroke-width="1"/><rect x="1.8" y="3.2" width="4.4" height="4.3" fill="#336a9c"/><rect x="1.8" y="2.2" width="4.4" height="1" fill="#8ac4e8"/></svg>
<div class="t" style="left:148px;top:395.0px;color:#222">98178bbd-cda2-47d6-b1e2-8a0260...</div>
<svg class="ic" style="left:267px;top:396.0px" width="8" height="8"><circle cx="4" cy="4" r="3.1" fill="none" stroke="#4aa84a" stroke-width="0.8"/><path d="M2.5 4.1 L3.6 5.1 L5.6 3" stroke="#4aa84a" stroke-width="0.8" fill="none"/></svg>
<div class="t" style="left:314px;top:395.0px;color:#6d6d6d">10/30/2008 7:23 PM</div>
<div class="t" style="left:407px;top:395.0px;color:#6d6d6d">JPG File</div>
<div class="t" style="right:314px;top:395.0px;color:#6d6d6d">2,357 KB</div>
<svg class="ic" style="left:136.5px;top:407.6px" width="8" height="10"><rect x="0.5" y="0.5" width="7" height="9" fill="#e6f2fb" stroke="#9cc4e4" stroke-width="1"/><rect x="1.8" y="3.2" width="4.4" height="4.3" fill="#336a9c"/><rect x="1.8" y="2.2" width="4.4" height="1" fill="#8ac4e8"/></svg>
<div class="t" style="left:148px;top:407.1px;color:#222">160609-abstract-digital_art-minima...</div>
<svg class="ic" style="left:266.5px;top:408.1px" width="9" height="8"><path d="M2 6.3 A1.6 1.6 0 0 1 2.2 3.2 A2.4 2.4 0 0 1 6.6 3.2 A1.6 1.6 0 0 1 7 6.3 Z" fill="none" stroke="#3c82c8" stroke-width="0.85"/></svg>
<div class="t" style="left:314px;top:407.1px;color:#6d6d6d">7/17/2017 11:06 AM</div>
<div class="t" style="left:407px;top:407.1px;color:#6d6d6d">JPG File</div>
<div class="t" style="right:314px;top:407.1px;color:#6d6d6d">223 KB</div>
<svg class="ic" style="left:136.5px;top:419.6px" width="8" height="10"><rect x="0.5" y="0.5" width="7" height="9" fill="#e6f2fb" stroke="#9cc4e4" stroke-width="1"/><rect x="1.8" y="3.2" width="4.4" height="4.3" fill="#336a9c"/><rect x="1.8" y="2.2" width="4.4" height="1" fill="#8ac4e8"/></svg>
<div class="t" style="left:148px;top:419.1px;color:#222">5497419-simple-wallpaper.png</div>
<svg class="ic" style="left:267px;top:420.1px" width="8" height="8"><circle cx="4" cy="4" r="3.1" fill="none" stroke="#4aa84a" stroke-width="0.8"/><path d="M2.5 4.1 L3.6 5.1 L5.6 3" stroke="#4aa84a" stroke-width="0.8" fill="none"/></svg>
<div class="t" style="left:314px;top:419.1px;color:#6d6d6d">6/12/2017 1:03 PM</div>
<div class="t" style="left:407px;top:419.1px;color:#6d6d6d">PNG File</div>
<div class="t" style="right:314px;top:419.1px;color:#6d6d6d">116 KB</div>
<svg class="ic" style="left:136.5px;top:431.7px" width="8" height="10"><rect x="0.5" y="0.5" width="7" height="9" fill="#e6f2fb" stroke="#9cc4e4" stroke-width="1"/><rect x="1.8" y="3.2" width="4.4" height="4.3" fill="#336a9c"/><rect x="1.8" y="2.2" width="4.4" height="1" fill="#8ac4e8"/></svg>
<div class="t" style="left:148px;top:431.2px;color:#222">39652331-garage-wallpapers.jpg</div>
<svg class="ic" style="left:266.5px;top:432.2px" width="9" height="8"><path d="M2 6.3 A1.6 1.6 0 0 1 2.2 3.2 A2.4 2.4 0 0 1 6.6 3.2 A1.6 1.6 0 0 1 7 6.3 Z" fill="none" stroke="#3c82c8" stroke-width="0.85"/></svg>
<div class="t" style="left:314px;top:431.2px;color:#6d6d6d">7/7/2017 1:41 PM</div>
<div class="t" style="left:407px;top:431.2px;color:#6d6d6d">JPG File</div>
<div class="t" style="right:314px;top:431.2px;color:#6d6d6d">398 KB</div>
<svg class="ic" style="left:136.5px;top:443.7px" width="8" height="10"><rect x="0.5" y="0.5" width="7" height="9" fill="#e6f2fb" stroke="#9cc4e4" stroke-width="1"/><rect x="1.8" y="3.2" width="4.4" height="4.3" fill="#336a9c"/><rect x="1.8" y="2.2" width="4.4" height="1" fill="#8ac4e8"/></svg>
<div class="t" style="left:148px;top:443.2px;color:#222">51273296-e9a0-49f6-90c6-83822ed6...</div>
<svg class="ic" style="left:267px;top:444.2px" width="8" height="8"><circle cx="4" cy="4" r="3.1" fill="none" stroke="#4aa84a" stroke-width="0.8"/><path d="M2.5 4.1 L3.6 5.1 L5.6 3" stroke="#4aa84a" stroke-width="0.8" fill="none"/></svg>
<div class="t" style="left:314px;top:443.2px;color:#6d6d6d">11/21/2014 8:25 AM</div>
<div class="t" style="left:407px;top:443.2px;color:#6d6d6d">JPG File</div>
<div class="t" style="right:314px;top:443.2px;color:#6d6d6d">968 KB</div>
<svg class="ic" style="left:136.5px;top:455.7px" width="8" height="10"><rect x="0.5" y="0.5" width="7" height="9" fill="#e6f2fb" stroke="#9cc4e4" stroke-width="1"/><rect x="1.8" y="3.2" width="4.4" height="4.3" fill="#336a9c"/><rect x="1.8" y="2.2" width="4.4" height="1" fill="#8ac4e8"/></svg>
<div class="t" style="left:148px;top:455.2px;color:#222">59692770-landscape-wallpaper.jpg</div>
<svg class="ic" style="left:267px;top:456.2px" width="8" height="8"><circle cx="4" cy="4" r="3.1" fill="none" stroke="#4aa84a" stroke-width="0.8"/><path d="M2.5 4.1 L3.6 5.1 L5.6 3" stroke="#4aa84a" stroke-width="0.8" fill="none"/></svg>
<div class="t" style="left:314px;top:455.2px;color:#6d6d6d">5/3/2017 3:20 PM</div>
<div class="t" style="left:407px;top:455.2px;color:#6d6d6d">JPG File</div>
<div class="t" style="right:314px;top:455.2px;color:#6d6d6d">330 KB</div>
</div>



<!-- taskbar -->
<div class="a" style="left:0;top:494px;width:827px;height:23px;background:#060a1a"></div>
<svg class="ic" style="left:8px;top:500px" width="12" height="11"><path d="M0.5 1.5 L4.8 0.9 L4.8 5 L0.5 5 Z M5.6 0.8 L11 0 L11 5 L5.6 5 Z M0.5 5.8 L4.8 5.8 L4.8 9.9 L0.5 9.3 Z M5.6 5.8 L11 5.8 L11 10.8 L5.6 10 Z" fill="#fff"/></svg>
<div class="a" style="left:37px;top:501px;width:8.5px;height:8.5px;border:1.3px solid #fff;border-radius:50%"></div>
<svg class="ic" style="left:62px;top:500px" width="14" height="11"><rect x="3.5" y="1.5" width="7" height="8" rx="1" stroke="#d0d0d0" stroke-width="0.8" fill="none"/><path d="M1.5 3 V8 M12.5 3 V8" stroke="#d0d0d0" stroke-width="0.8"/></svg>

<div class="a" style="left:87px;top:515px;width:23px;height:2px;background:#8ab8e8"></div>
<svg class="ic" style="left:92px;top:500px" width="13" height="11"><path d="M0.5 0.5 L5 0.5 L6 1.5 L12.5 1.5 L12.5 10.5 L0.5 10.5 Z" fill="#f6d878"/><rect x="0.5" y="5.5" width="12" height="2.5" fill="#4ab0e0"/><rect x="3" y="6.2" width="7" height="1.2" fill="#2a80c0"/><rect x="0.5" y="8" width="12" height="2.5" fill="#f0e6a8"/></svg>
<svg class="ic" style="left:120px;top:499px" width="13" height="13"><path d="M4 3 Q4 0.5 6.5 0.5 Q9 0.5 9 3" stroke="#fff" stroke-width="1" fill="none"/><path d="M0.5 3 L12.5 3 L12.5 12.5 L0.5 12.5 Z" fill="#fff"/><path d="M3.5 5.5 H6 V8 H3.5 Z M7 5.5 H9.5 V8 H7 Z M3.5 9 H6 V11.5 H3.5 Z M7 9 H9.5 V11.5 H7 Z" fill="#060a1a"/></svg>
<svg class="ic" style="left:147px;top:501px" width="15" height="10"><path d="M0.5 0.5 L14.5 0.5 L14.5 9.5 L0.5 9.5 Z" fill="#fff"/><path d="M0.5 1 L7.5 6 L14.5 1" stroke="#060a1a" stroke-width="1" fill="none"/></svg>
<svg class="ic" style="left:177px;top:500px" width="13" height="12"><path d="M11.8 6.8 L3.4 6.8 Q3.8 10 7.3 10 Q9.8 10 11.4 8.8 L11.4 11 Q9.6 12 7 12 Q1 12 1 6 Q1 0.2 7 0.2 Q12.2 0.2 11.8 6.8 Z M3.4 5 L9.2 5 Q9 2.2 6.5 2.2 Q4 2.2 3.4 5 Z" fill="#1f7ad8"/></svg>
<svg class="ic" style="left:204px;top:499px" width="14" height="14"><circle cx="7" cy="7" r="6.5" fill="#eec66a"/><circle cx="4.2" cy="5" r="1.1" fill="#c0392b"/><circle cx="7.5" cy="3.5" r="0.9" fill="#2a6a2a"/><circle cx="4.5" cy="9" r="1" fill="#222"/><circle cx="9" cy="10" r="0.9" fill="#8a4a2a"/></svg>

<div class="a" style="left:227px;top:515px;width:23px;height:2px;background:#8ab8e8"></div>
<svg class="ic" style="left:233px;top:499px" width="12" height="13"><path d="M6 1 L7 3 L9 2 L8.5 4.5 L11 5.5 L9 7 L10.5 9.5 L8 9.5 L7.5 12 L5.5 10.5 L3.5 12 L3.5 9.5 L1 9 L2.5 7 L0.8 5 L3.5 4.5 L3.5 2 L5 3 Z" fill="#2a80d8"/><circle cx="6" cy="6.8" r="1.6" fill="#cfe6ff"/></svg>

<div class="a" style="left:628px;top:498px;width:15px;height:15px;border-radius:50%;background:#8e8e8e;color:#333;font-size:7px;text-align:center;line-height:15px">M</div>
<svg class="ic" style="left:658px;top:500px" width="10" height="11"><circle cx="6" cy="3" r="2" stroke="#ddd" stroke-width="0.9" fill="none"/><path d="M2 10 Q3 5.5 6 5.5 Q8.5 5.5 9.5 9" stroke="#ddd" stroke-width="0.9" fill="none"/><circle cx="3" cy="6" r="1.4" stroke="#ddd" stroke-width="0.8" fill="none"/><path d="M0.5 10.5 Q1 8 3 8" stroke="#ddd" stroke-width="0.8" fill="none"/></svg>
<svg class="ic" style="left:682px;top:503px" width="9" height="6"><path d="M0.8 5 L4.5 1 L8.2 5" stroke="#ddd" stroke-width="1" fill="none"/></svg>
<svg class="ic" style="left:699px;top:500px" width="11" height="11"><path d="M1.5 8 A1.7 1.7 0 0 1 1.8 4.6 A2.8 2.8 0 0 1 6.5 2.8 A2.4 2.4 0 0 1 9.6 5.4 A1.4 1.4 0 0 1 9.4 8 Z" fill="#3a8ae0"/><circle cx="7.5" cy="7.5" r="2.5" fill="#cfe0f8"/><path d="M6 7.5 H9 M7.5 6 V9" stroke="#1a5ab0" stroke-width="0.8"/></svg>
<svg class="ic" style="left:717px;top:500px" width="11" height="11"><rect x="2" y="0.8" width="8.5" height="6.5" stroke="#ddd" stroke-width="0.9" fill="none"/><path d="M6 7.5 L6 9.8 M3.5 10 L8.5 10 M0.5 2 L0.5 6" stroke="#ddd" stroke-width="0.9"/></svg>
<svg class="ic" style="left:736px;top:500px" width="10" height="11"><path d="M0.8 4 L2.8 4 L5.2 1.5 L5.2 9.5 L2.8 7 L0.8 7 Z" stroke="#ddd" stroke-width="0.9" fill="none"/><path d="M6.8 3.5 Q7.8 5.5 6.8 7.5 M8.3 2 Q10 5.5 8.3 9" stroke="#ddd" stroke-width="0.8" fill="none"/></svg>
<svg class="ic" style="left:755px;top:500px" width="15" height="10"><rect x="0.6" y="0.6" width="13.8" height="8.3" stroke="#ddd" stroke-width="0.9" fill="none"/><path d="M2.5 3 H12.5 M2.5 4.8 H12.5 M4 6.8 H11" stroke="#bbb" stroke-width="0.7"/></svg>
<svg class="ic" style="left:780px;top:500px" width="10" height="11"><rect x="0.6" y="1" width="8.8" height="8.8" stroke="#ddd" stroke-width="0.9" fill="none"/><path d="M0.6 7 H9.4" stroke="#ddd" stroke-width="0.9"/></svg>
<svg class="ic" style="left:803px;top:499px" width="11" height="13"><path d="M0.5 0.8 L10 0.8 L10 8.5 L5 8.5 L2.5 11 L2.5 8.5 L0.5 8.5 Z" fill="#eee"/><path d="M2.5 3 H8 M2.5 5 H8 M2.5 7 H6" stroke="#060a1a" stroke-width="0.7"/></svg>

<!-- onedrive panel -->
<div class="a" style="left:613px;top:236px;width:183px;height:258px;background:#fff;border-left:1px solid #9a9a9a"></div>
<div class="a" style="left:613px;top:236px;width:183px;height:30px;background:#1a7cdb"></div>
<svg class="ic" style="left:621px;top:243px" width="16" height="16"><path d="M2.4 10 A5.8 5.8 0 0 1 10.8 3" stroke="#cfe8ff" stroke-width="1.25" fill="none"/><path d="M13.6 6 A5.8 5.8 0 0 1 5.2 13" stroke="#cfe8ff" stroke-width="1.25" fill="none"/><path d="M8.8 0.8 L12.8 2.4 L9.8 5.4 Z" fill="#cfe8ff"/><path d="M7.2 15.2 L3.2 13.6 L6.2 10.6 Z" fill="#cfe8ff"/></svg>
<div class="t" style="left:641px;top:242.5px;color:#fff;font-size:6.85px;-webkit-text-stroke:0.15px #fff">OneDrive is updating files...</div>
<div class="t" style="left:641px;top:250.5px;color:#e6f0fa;font-size:6.85px">Family</div>
<svg class="ic" style="left:751px;top:244px" width="16" height="14"><path d="M1.5 1.8 L5.5 1.8 L6.5 2.8 L14.5 2.8 L14.5 12.5 L1.5 12.5 Z M1.5 3.6 L14.5 3.6" stroke="#d6ebff" stroke-width="0.9" fill="none"/></svg>
<svg class="ic" style="left:775px;top:244px" width="14" height="14"><path d="M11.39 7.28 L12.85 8.33 L12.07 10.20 L10.30 9.91 L9.91 10.30 L10.20 12.07 L8.33 12.85 L7.28 11.39 L6.72 11.39 L5.67 12.85 L3.80 12.07 L4.09 10.30 L3.70 9.91 L1.93 10.20 L1.15 8.33 L2.61 7.28 L2.61 6.72 L1.15 5.67 L1.93 3.80 L3.70 4.09 L4.09 3.70 L3.80 1.93 L5.67 1.15 L6.72 2.61 L7.28 2.61 L8.33 1.15 L10.20 1.93 L9.91 3.70 L10.30 4.09 L12.07 3.80 L12.85 5.67 L11.39 6.72 Z" stroke="#d6ebff" stroke-width="0.85" fill="none" stroke-linejoin="round"/><circle cx="7" cy="7" r="1.8" stroke="#d6ebff" stroke-width="0.85" fill="none"/></svg>

<div class="a" style="left:614px;top:266px;width:182px;height:69px;background:#dbe8f5"></div>
<svg class="ic" style="left:619px;top:270px" width="26" height="28"><path d="M6.5 0.5 L19 0.5 L23.5 5 L23.5 25.5 L6.5 25.5 Z" fill="#fdfdfd" stroke="#d0d4d8" stroke-width="0.8"/><path d="M9 6 H16 M9 9 H21 M9 12 H21 M9 15 H21 M9 18 H21 M9 21 H21" stroke="#e0d8d0" stroke-width="0.9"/><path d="M3 26.5 A2.6 2.6 0 0 1 3.4 21.6 A4 4 0 0 1 10.6 20.6 A2.6 2.6 0 0 1 13 26.5 Z" fill="#dbe8f5" stroke="#505a64" stroke-width="0.9"/></svg>
<div class="t" style="left:655px;top:271px;color:#333;font-size:7.5px;font-weight:bold">Files On-Demand is enabled</div>
<svg class="ic" style="left:787px;top:268px" width="7" height="7"><path d="M1.2 1.2 L5.8 5.8 M5.8 1.2 L1.2 5.8" stroke="#222" stroke-width="1"/></svg>
<div class="t" style="left:655px;top:281px;color:#444;font-size:6.65px">Your files are available on demand to save</div>
<div class="t" style="left:655px;top:289.5px;color:#444;font-size:6.65px">space. Learn how this new form of syncing</div>
<div class="t" style="left:655px;top:298px;color:#444;font-size:6.65px">works.</div>
<div class="a" style="left:655px;top:312px;width:48px;height:18px;background:#1077d0"></div>
<div class="t" style="left:661.5px;top:316px;color:#fff;font-size:6.85px">Learn More</div>

<div class="a" style="left:614px;top:334.5px;width:182px;height:19.5px;background:#f5f5f5"></div>
<div class="t" style="left:624.5px;top:339.2px;color:#6a6a6a;font-size:6.75px">Processing changes</div>
<div class="a" style="left:792px;top:354px;width:3px;height:140px;background:#f8f8f8"></div>
<div class="a" style="left:792px;top:356px;width:3px;height:60px;background:#c8c8c8"></div>

<div class="a" style="left:0;top:0;width:827px;height:494px;overflow:hidden">
<svg class="ic" style="left:624px;top:362.0px" width="20" height="25"><path d="M0.5 0.5 L14.5 0.5 L18.5 4.5 L18.5 23.5 L0.5 23.5 Z" fill="#fff" stroke="#b8bcc0" stroke-width="0.8"/><path d="M14.5 0.5 L14.5 4.5 L18.5 4.5" stroke="#b8bcc0" stroke-width="0.8" fill="none"/><rect x="3" y="6" width="13.5" height="13" fill="#d2e8f8"/><path d="M3 19 L7.6 9.8 L10.6 14.6 L12.6 12 L16.5 19 Z" fill="#1670c8"/></svg>
<div class="t" style="left:655px;top:360.0px;color:#3c3c3c;font-size:8px;font-weight:bold">DellPC-07-26-2017-0807-45.jpg</div>
<div class="t" style="left:655px;top:370.2px;color:#6a6a6a;font-size:6.7px">Available in <span style="color:#2a7ac8">Between PCs</span></div>
<div class="t" style="left:655px;top:378.7px;color:#8a8a8a;font-size:6.2px">1 hour ago</div>
<svg class="ic" style="left:624px;top:401.0px" width="20" height="25"><path d="M0.5 0.5 L14.5 0.5 L18.5 4.5 L18.5 23.5 L0.5 23.5 Z" fill="#fff" stroke="#b8bcc0" stroke-width="0.8"/><path d="M14.5 0.5 L14.5 4.5 L18.5 4.5" stroke="#b8bcc0" stroke-width="0.8" fill="none"/><rect x="3" y="6" width="13.5" height="13" fill="#d2e8f8"/><path d="M3 19 L7.6 9.8 L10.6 14.6 L12.6 12 L16.5 19 Z" fill="#1670c8"/></svg>
<div class="t" style="left:655px;top:399.0px;color:#3c3c3c;font-size:8px;font-weight:bold;letter-spacing:-0.2px">skip-ahead-windows-10-insiders-se...</div>
<div class="t" style="left:655px;top:409.2px;color:#6a6a6a;font-size:6.7px">Uploaded to <span style="color:#2a7ac8">Between PCs</span></div>
<div class="t" style="left:655px;top:417.7px;color:#8a8a8a;font-size:6.2px">1 hour ago</div>
<svg class="ic" style="left:624px;top:440.0px" width="20" height="25"><path d="M0.5 0.5 L14.5 0.5 L18.5 4.5 L18.5 23.5 L0.5 23.5 Z" fill="#fff" stroke="#b8bcc0" stroke-width="0.8"/><path d="M14.5 0.5 L14.5 4.5 L18.5 4.5" stroke="#b8bcc0" stroke-width="0.8" fill="none"/><rect x="3" y="6" width="13.5" height="13" fill="#d2e8f8"/><path d="M3 19 L7.6 9.8 L10.6 14.6 L12.6 12 L16.5 19 Z" fill="#1670c8"/></svg>
<div class="t" style="left:655px;top:438.0px;color:#3c3c3c;font-size:8px;font-weight:bold;letter-spacing:-0.2px">skip-ahead-windows-10-insiders-se...</div>
<div class="t" style="left:655px;top:448.2px;color:#6a6a6a;font-size:6.7px">Renamed in <span style="color:#2a7ac8">Between PCs</span></div>
<div class="t" style="left:655px;top:456.7px;color:#8a8a8a;font-size:6.2px">1 hour ago</div>
<svg class="ic" style="left:624px;top:479.0px" width="20" height="25"><path d="M0.5 0.5 L14.5 0.5 L18.5 4.5 L18.5 23.5 L0.5 23.5 Z" fill="#fff" stroke="#b8bcc0" stroke-width="0.8"/><path d="M14.5 0.5 L14.5 4.5 L18.5 4.5" stroke="#b8bcc0" stroke-width="0.8" fill="none"/><rect x="3" y="6" width="13.5" height="13" fill="#d2e8f8"/><path d="M3 19 L7.6 9.8 L10.6 14.6 L12.6 12 L16.5 19 Z" fill="#1670c8"/></svg>
<div class="t" style="left:655px;top:477.0px;color:#3c3c3c;font-size:8px;font-weight:bold;letter-spacing:-0.2px">windows-10-skip-ahead-redstone4....</div>
<div class="t" style="left:655px;top:487.2px;color:#6a6a6a;font-size:6.7px">Renamed in <span style="color:#2a7ac8">Between PCs</span></div>
<div class="t" style="left:655px;top:495.7px;color:#8a8a8a;font-size:6.2px">1 hour ago</div>
</div>
</body></html>
